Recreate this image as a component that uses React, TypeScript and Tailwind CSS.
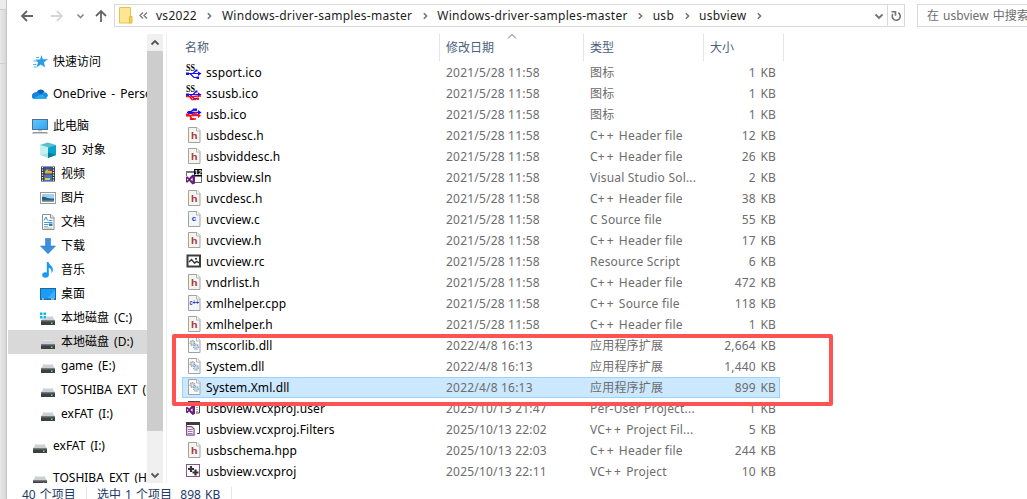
import React from 'react';
import clsx from 'clsx';

type FileKind = 'ssport' | 'ssusb' | 'usb' | 'h' | 'c' | 'cpp' | 'sln' | 'rc' | 'dll' | 'user' | 'filters' | 'vcxproj';

interface FileEntry {
  name: string;
  date: string;
  type: string;
  size: string;
  kind: FileKind;
  selected?: boolean;
}

const files: FileEntry[] = [
  { name: 'ssport.ico', date: '2021/5/28 11:58', type: '图标', size: '1 KB', kind: 'ssport' },
  { name: 'ssusb.ico', date: '2021/5/28 11:58', type: '图标', size: '1 KB', kind: 'ssusb' },
  { name: 'usb.ico', date: '2021/5/28 11:58', type: '图标', size: '1 KB', kind: 'usb' },
  { name: 'usbdesc.h', date: '2021/5/28 11:58', type: 'C++ Header file', size: '12 KB', kind: 'h' },
  { name: 'usbviddesc.h', date: '2021/5/28 11:58', type: 'C++ Header file', size: '26 KB', kind: 'h' },
  { name: 'usbview.sln', date: '2021/5/28 11:58', type: 'Visual Studio Sol...', size: '2 KB', kind: 'sln' },
  { name: 'uvcdesc.h', date: '2021/5/28 11:58', type: 'C++ Header file', size: '38 KB', kind: 'h' },
  { name: 'uvcview.c', date: '2021/5/28 11:58', type: 'C Source file', size: '55 KB', kind: 'c' },
  { name: 'uvcview.h', date: '2021/5/28 11:58', type: 'C++ Header file', size: '17 KB', kind: 'h' },
  { name: 'uvcview.rc', date: '2021/5/28 11:58', type: 'Resource Script', size: '6 KB', kind: 'rc' },
  { name: 'vndrlist.h', date: '2021/5/28 11:58', type: 'C++ Header file', size: '472 KB', kind: 'h' },
  { name: 'xmlhelper.cpp', date: '2021/5/28 11:58', type: 'C++ Source file', size: '118 KB', kind: 'cpp' },
  { name: 'xmlhelper.h', date: '2021/5/28 11:58', type: 'C++ Header file', size: '1 KB', kind: 'h' },
  { name: 'mscorlib.dll', date: '2022/4/8 16:13', type: '应用程序扩展', size: '2,664 KB', kind: 'dll' },
  { name: 'System.dll', date: '2022/4/8 16:13', type: '应用程序扩展', size: '1,440 KB', kind: 'dll' },
  { name: 'System.Xml.dll', date: '2022/4/8 16:13', type: '应用程序扩展', size: '899 KB', kind: 'dll', selected: true },
  { name: 'usbview.vcxproj.user', date: '2025/10/13 21:47', type: 'Per-User Project...', size: '1 KB', kind: 'user' },
  { name: 'usbview.vcxproj.Filters', date: '2025/10/13 22:02', type: 'VC++ Project Fil...', size: '5 KB', kind: 'filters' },
  { name: 'usbschema.hpp', date: '2025/10/13 22:03', type: 'C++ Header file', size: '244 KB', kind: 'h' },
  { name: 'usbview.vcxproj', date: '2025/10/13 22:11', type: 'VC++ Project', size: '10 KB', kind: 'vcxproj' },
];

const crumbs = ['vs2022', 'Windows-driver-samples-master', 'Windows-driver-samples-master', 'usb', 'usbview'];

const Svg: React.FC<{ children: React.ReactNode }> = ({ children }) => (
  <svg width="16" height="16" viewBox="0 0 16 16" className="shrink-0">{children}</svg>
);

const Page: React.FC<{ fill?: string; children?: React.ReactNode }> = ({ fill = '#f3f6f0', children }) => (
  <Svg>
    <path d="M2.5.5h8.500l3 3v12H2.500z" fill={fill} stroke="#a0a39e" />
    <path d="M10.500.5v3.500H14" fill="#fff" stroke="#b4b6b2" />
    {children}
  </Svg>
);

const VsMark: React.FC<{ y: number }> = ({ y }) => (
  <path
    transform={`translate(0 ${y})`}
    fill="#68217a"
    fillRule="evenodd"
    d="M6.500 0L9 1v8l-2.500 1L3.200 6.600 1.200 8.200 0 7.600V2.400l1.200-.6 2 1.600zM1.200 3.700v2.600L2.400 5zM6.500 3.200L4.600 5l1.900 1.800z"
  />
);

const UsbTrident: React.FC<{ ss?: boolean; red?: boolean }> = ({ ss, red }) => (
  <Svg>
    {ss ? (
      <>
        <path d="M1 9.500h12M4 9.500l4 4h3M7 9.500l3-3" stroke="#1010ff" strokeWidth="1.200" fill="none" />
        <path d="M12 7.500l3.500 2-3.500 2.500z" fill="#1010ff" />
        <path d="M0 8.500h3v2.500H0zM9.500 5.500h2v2h-2z" fill="#1010ff" />
        <path d="M10.500 12.500h2.500v2.500h-2.500z" fill={red ? '#ff1010' : '#1010ff'} />
        {red && <path d="M0 11.500h8l4-.5h3M4 12l2 2.500h4" stroke="#ff1010" strokeWidth="1.700" fill="none" />}
        <text x="0" y="6.800" fontSize="9.500" fontWeight="bold" fontFamily="Liberation Serif, serif" textLength="9" lengthAdjust="spacingAndGlyphs" fill="#000">SS</text>
      </>
    ) : (
      <>
        <path d="M1 6.500h12M4 6.500l3-2.500h4M5 7l3 2h4" stroke="#1010ff" strokeWidth="1.400" fill="none" />
        <path d="M12 4l3.500 2.500L12 9zM2 5h3v3H2z" fill="#1010ff" />
        <path d="M1 9.500h12M4 10l2 3h4M6 9l3-2h2" stroke="#ff1010" strokeWidth="1.500" fill="none" />
        <path d="M12 7.500l3 2-3 2.500zM0 7.500h3.500v3H0zM4 12h4v2H4z" fill="#ff1010" />
        <path d="M7 2.500h4v2H7z" fill="#1010ff" />
      </>
    )}
  </Svg>
);

const FileGlyph: React.FC<{ kind: FileKind }> = ({ kind }) => {
  switch (kind) {
    case 'ssport':
      return <UsbTrident ss />;
    case 'ssusb':
      return <UsbTrident ss red />;
    case 'usb':
      return <UsbTrident />;
    case 'h':
      return (
        <Page>
          <text x="5" y="12" fontSize="8.500" fontWeight="bold" fontFamily="Liberation Sans, sans-serif" textLength="6.500" lengthAdjust="spacingAndGlyphs" fill="#a8373c">h</text>
        </Page>
      );
    case 'c':
      return (
        <Page fill="#f1f4f8">
          <text x="5.800" y="10.300" fontSize="8" fontWeight="bold" fontFamily="Liberation Sans, sans-serif" fill="#2b35b0">c</text>
        </Page>
      );
    case 'cpp':
      return (
        <Page fill="#f1f4f8">
          <text x="3.500" y="10" fontSize="7.500" fontWeight="bold" fontFamily="Liberation Sans, sans-serif" textLength="9.500" lengthAdjust="spacingAndGlyphs" fill="#2b35b0">c++</text>
        </Page>
      );
    case 'dll':
      return (
        <Page fill="#fbfbfb">
          <circle cx="6.500" cy="6" r="2.200" fill="none" stroke="#98a1a6" strokeWidth="1.600" strokeDasharray="1.200 .6" />
          <circle cx="6.500" cy="6" r="1.300" fill="#e8ecee" stroke="#a5aeb3" strokeWidth=".6" />
          <circle cx="10" cy="9.800" r="2.300" fill="none" stroke="#86aeca" strokeWidth="1.600" strokeDasharray="1.200 .6" />
          <circle cx="10" cy="9.800" r="1.300" fill="#e4f0f8" stroke="#86aeca" strokeWidth=".6" />
        </Page>
      );
    case 'sln':
      return (
        <Svg>
          <path d="M.5 7V2.500H8M9 13.500h6.500V7" fill="none" stroke="#6a6a6a" />
          <path d="M0 2h8v2H0z" fill="#777" />
          <rect x="8" width="8" height="7.500" fill="#000" />
          <text x="8.600" y="6" fontSize="6.500" fontWeight="bold" fontFamily="Liberation Sans, sans-serif" fill="#fff">12</text>
          <VsMark y={5.500} />
        </Svg>
      );
    case 'user':
      return (
        <Svg>
          <path d="M2.500 6V1.500h11v11.500H10" fill="#fff" stroke="#444" />
          <path d="M2 1h12v3H2z" fill="#444" />
          <path d="M11 5v7" stroke="#555" strokeDasharray="1 1" />
          <VsMark y={5} />
        </Svg>
      );
    case 'filters':
      return (
        <Svg>
          <path d="M.5 5V1.500h13v11H11" fill="#fff" stroke="#3d3d3d" />
          <path d="M0 1h14v3H0z" fill="#3d3d3d" />
          <path d="M.6 5.600h5l2.500 2.500v6H.600z" fill="#f5eef7" stroke="#85548f" strokeWidth="1.200" />
          <path d="M2 8.500h4.500M2 10.500h4.500M2 12.500h4.500" stroke="#85548f" strokeWidth=".8" />
        </Svg>
      );
    case 'rc':
      return (
        <Svg>
          <rect x="1.500" y="2.500" width="12.500" height="11" fill="#fff" stroke="#3c3c3c" strokeWidth="2" />
          <path d="M3 9l2.500-2.500 3 3.500 2.500-1.500 2 1.500" fill="none" stroke="#3c3c3c" strokeWidth="1.500" />
          <circle cx="10" cy="5.800" r="1.100" fill="#3c3c3c" />
        </Svg>
      );
    case 'vcxproj':
      return (
        <Svg>
          <rect x=".5" y="1.500" width="13" height="12" fill="#fff" stroke="#85548f" />
          <path d="M5 3v6M2 6h6M9.500 6.500v6M6.500 9.500h6" stroke="#333" strokeWidth="2.200" />
        </Svg>
      );
  }
};

const Drive: React.FC<{ windows?: boolean }> = ({ windows }) => (
  <Svg>
    <path d="M3.500 6h9l2.500 5H1z" fill="#ccd0d4" />
    <path d="M3.500 6h9l.5 1H3z" fill="#e4e7e9" />
    <path d="M1 10.500h14V15H1z" fill="#3c4043" />
    <path d="M1 10.500h14v1H1z" fill="#6a6f73" />
    <path d="M11 12.500h1.500V14H11z" fill="#59f36a" />
    {windows && (
      <>
        <path d="M0 2h6.500v6.500H0z" fill="#fff" />
        <path d="M0 2.500h2.500V5H0zM3.500 2.500H6V5H3.500zM0 6h2.500v2.500H0zM3.500 6H6v2.500H3.500z" fill="#13b5ea" />
      </>
    )}
  </Svg>
);

const StarIcon = () => (
  <Svg>
    <path d="M9.500 1l1.400 4.300H16l-4 3 1 5.200-4.200-2.900-4.300 3L6 8.500 3.500 5.600h4.600z" fill="#2a9be8" />
    <path d="M4 3.500h3M1.500 7h4M1 10.500h3.500M1.500 13h3" stroke="#5bb7f0" strokeWidth="1.200" />
  </Svg>
);

const CloudIcon = () => (
  <Svg>
    <path d="M4.500 6.500a4.500 4.500 0 0 1 8-1l-3 4-6 2z" fill="#0a62b8" />
    <path d="M3.500 6.200A3.700 3.700 0 0 0 1.500 13l8-4-3-2.400a4 4 0 0 0-3-.4z" fill="#1285d8" />
    <path d="M9 8l3-1.700a3.600 3.600 0 0 1 4 3.500L13.500 13z" fill="#1592e6" />
    <path d="M1.200 12.400L8.500 8.600l6.500 3.600a2.800 2.800 0 0 1-2 .9H3.500a3.400 3.400 0 0 1-2.300-.7z" fill="#29a8ec" />
  </Svg>
);

const ComputerIcon = () => (
  <Svg>
    <defs>
      <linearGradient id="screen" x2="1" y2="1">
        <stop stopColor="#6bc6ff" />
        <stop offset="1" stopColor="#2ba4f5" />
      </linearGradient>
    </defs>
    <rect x=".5" y="1.500" width="15" height="10" fill="url(#screen)" stroke="#48748f" />
    <path d="M6 12h4v1.500H6z" fill="#c3ccd2" />
    <path d="M1 14h14l1 1.500H0z" fill="#8d9aa5" />
  </Svg>
);

const CubeIcon = () => (
  <Svg>
    <path d="M0 3l8-2.500V16l-8-3z" fill="#a8e4e6" />
    <path d="M0 3l8-2.500L16 3 9 5.500z" fill="#57bfcb" />
    <path d="M8 5.500L16 3v10l-8 3z" fill="#0aa2cf" />
    <path d="M0 3l8 2.500V11l-8 2z" fill="#c5f0ee" />
    <path d="M8 10.500l8 2.500-8 3z" fill="#087f96" />
  </Svg>
);

const VideoIcon = () => (
  <Svg>
    <path d="M1 .5h14v15H1z" fill="#333" />
    <path d="M2.500 1v15M13.500 1v15" stroke="#fff" strokeWidth="1.300" strokeDasharray="1.300 1.200" />
    <path d="M4 1h8v6.500H4z" fill="#2b55b5" />
    <path d="M4 8.500h8V15H4z" fill="#3c78d0" />
    <path d="M5 5.500l2-2.500 2 2h3v2.500H5z" fill="#d8b72c" />
    <path d="M8 3h2v2H8zM5 9.500h2v1.500H5z" fill="#d9462f" />
    <path d="M5 12h5v2H5z" fill="#e3c744" />
  </Svg>
);

const PictureIcon = () => (
  <Svg>
    <rect x=".5" y="2.500" width="15" height="11" fill="#fff" stroke="#9a9a9a" />
    <path d="M2 4h12v8H2z" fill="#9dd0f2" />
    <path d="M2 7c3-1 4 .5 6 1s4 .5 6 .5V12H2z" fill="#355f6e" />
    <path d="M2 10.500h12V12H2z" fill="#6fa5b5" />
  </Svg>
);

const DocumentIcon = () => (
  <Svg>
    <path d="M2.500.5h8.500l3 3v12H2.500z" fill="#fff" stroke="#8f8f8f" />
    <path d="M10.500.5v3.500H14" fill="#eee" stroke="#8f8f8f" />
    <path d="M4 6.500l2-3.500 1.500 3.500" stroke="#2b94dc" fill="none" />
    <path d="M8.500 6.500h4M4 8.500h8.500M4 10.500h4.500" stroke="#2b94dc" strokeWidth=".9" />
    <path d="M9 9.500h3.500V12H9z" fill="#3678a8" />
    <path d="M4 12.500h4M4 14h8.500" stroke="#999" strokeWidth=".8" />
  </Svg>
);

const DownloadIcon = () => (
  <Svg>
    <path d="M5.500.5h5V8h5L8 15.700.5 8h5z" fill="#3b8fdc" stroke="#2f7cc6" strokeWidth=".6" />
  </Svg>
);

const MusicIcon = () => (
  <Svg>
    <ellipse cx="5.500" cy="13" rx="3.300" ry="2.700" fill="#1a9af0" />
    <path d="M6.800 0h1.800c.4 3 4.600 4 4.300 8-.1 1.300-.8 2.500-1.500 3.200C12 8 10.800 6.500 8.800 5.800V13h-2z" fill="#1a9af0" />
  </Svg>
);

const DesktopIcon = () => (
  <Svg>
    <rect x=".5" y="2.500" width="15" height="11" fill="#1b9df5" stroke="#17699f" />
    <path d="M7 12.500L15 4v8.500z" fill="#3bb0fa" />
    <path d="M1 12.500h14v1H1z" fill="#1878b8" />
    <path d="M2 13h2M11 13h3" stroke="#fff" strokeWidth=".9" />
  </Svg>
);

interface NavItemProps {
  icon: React.ReactNode;
  label: string;
  nested?: boolean;
  active?: boolean;
}

const NavItem: React.FC<NavItemProps> = ({ icon, label, nested, active }) => (
  <div
    className={clsx(
      'flex h-6 shrink-0 items-center gap-[5px] whitespace-nowrap text-black',
      nested ? 'pl-8' : 'pl-6',
      active && 'bg-[#d9d9d9]',
    )}
  >
    {icon}
    <span className="[word-spacing:2px]">{label}</span>
  </div>
);

const Chevron: React.FC<{ className?: string }> = ({ className }) => (
  <svg viewBox="0 0 10 10" className={clsx('shrink-0', className)} fill="none" stroke="currentColor" strokeWidth="1.800">
    <path d="M1.500 3.500L5 7l3.500-3.500" />
  </svg>
);

const Toolbar = () => (
  <div className="flex h-[30px] shrink-0 items-start pt-1">
    <svg width="107" height="23" viewBox="0 0 107 23" className="shrink-0" fill="none" stroke="#666" strokeWidth="1.800">
      <path d="M26 12H15M20 7l-5 5 5 5" />
      <path d="M44 12h11M50 7l5 5-5 5" stroke="#d6d6d6" />
      <path d="M70.500 10.500l3 3 3-3" stroke="#888" strokeWidth="1.600" />
      <path d="M94 18V7M89 12l5-5 5 5" />
    </svg>
    <div className="flex h-[23px] w-[791px] shrink-0 items-center border border-[#d9d9d9] text-[#1c1c1c]">
      <svg width="14" height="17" viewBox="0 0 14 17" className="ml-1 shrink-0">
        <path d="M.5.5h11v15.500H.5z" fill="#ffe694" stroke="#e9c34e" />
        <path d="M10.500 9.500H13V16h-2.500z" fill="#fbd45e" stroke="#e2b63d" />
      </svg>
      <svg width="10" height="9" viewBox="0 0 10 9" className="mr-[7px] ml-[6px] shrink-0" fill="none" stroke="#777" strokeWidth="1.300">
        <path d="M4 1.500l-3 3 3 3M8 1.500l-3 3 3 3" />
      </svg>
      {crumbs.map((crumb, i) => (
        <React.Fragment key={i}>
          <span className="tracking-[0.270px]">{crumb}</span>
          <span className="flex w-[25px] justify-center">
            <Chevron className="size-2 -rotate-90 text-[#6d6d6d]" />
          </span>
        </React.Fragment>
      ))}
      <Chevron className="mr-[3px] ml-auto size-[10px] text-[#737373]" />
      <span className="flex h-full w-[17px] items-center justify-center border-l border-[#d9d9d9]">
        <svg width="12" height="12" viewBox="0 0 12 12" fill="none" stroke="#737373" strokeWidth="1.600">
          <path d="M8.300 2.800A4 4 0 1 1 2.900 4" />
          <path d="M1.500 1.800h4v4" />
        </svg>
      </span>
    </div>
    <div className="ml-3 flex h-[23px] flex-1 items-center overflow-hidden border border-r-0 border-[#d9d9d9] pl-[9px] whitespace-nowrap text-[#6d6d6d] [word-spacing:1px]">
      在 usbview 中搜索
    </div>
  </div>
);

const Sidebar = () => (
  <div className="flex w-[157px] shrink-0">
    <div className="flex w-[140px] flex-col overflow-hidden pt-5 pl-px">
      <NavItem icon={<StarIcon />} label="快速访问" />
      <div className="h-2 shrink-0" />
      <NavItem icon={<CloudIcon />} label="OneDrive - Personal" />
      <div className="h-2 shrink-0" />
      <NavItem icon={<ComputerIcon />} label="此电脑" />
      <NavItem nested icon={<CubeIcon />} label="3D 对象" />
      <NavItem nested icon={<VideoIcon />} label="视频" />
      <NavItem nested icon={<PictureIcon />} label="图片" />
      <NavItem nested icon={<DocumentIcon />} label="文档" />
      <NavItem nested icon={<DownloadIcon />} label="下载" />
      <NavItem nested icon={<MusicIcon />} label="音乐" />
      <NavItem nested icon={<DesktopIcon />} label="桌面" />
      <NavItem nested icon={<Drive windows />} label="本地磁盘 (C:)" />
      <NavItem nested active icon={<Drive />} label="本地磁盘 (D:)" />
      <NavItem nested icon={<Drive />} label="game (E:)" />
      <NavItem nested icon={<Drive />} label="TOSHIBA EXT (H:)" />
      <NavItem nested icon={<Drive />} label="exFAT (I:)" />
      <div className="h-2 shrink-0" />
      <NavItem icon={<Drive />} label="exFAT (I:)" />
      <div className="h-2 shrink-0" />
      <NavItem icon={<Drive />} label="TOSHIBA EXT (H:)" />
    </div>
    <div className="mt-1 flex w-4 flex-col items-center bg-[#f0f0f0] text-[#555]">
      <div className="flex h-[17px] items-center">
        <Chevron className="size-[10px] rotate-180" />
      </div>
      <div className="h-[380px] w-full bg-[#cdcdcd]" />
      <Chevron className="mt-auto mb-[3px] size-[10px]" />
    </div>
  </div>
);

// Plus signs are set a little wider than the letters around them
const TypeLabel: React.FC<{ text: string }> = ({ text }) => {
  const [before, after] = text.split('++');
  return (
    <>
      {before}
      {after !== undefined && <span className="tracking-[2px]">++</span>}
      {after}
    </>
  );
};

const FileRow: React.FC<{ file: FileEntry }> = ({ file }) => (
  <div
    className={clsx(
      'flex h-[21px] w-[598px] shrink-0 items-center pl-1 text-[#6d6d6d]',
      file.selected && 'bg-[#cce8ff] outline outline-1 -outline-offset-1 outline-[#99d1ff]',
    )}
  >
    <span className="mb-px">
      <FileGlyph kind={file.kind} />
    </span>
    <span className="ml-1 w-[240px] tracking-[0.1px] text-black">{file.name}</span>
    <span className="w-36 tracking-[0.2px]">{file.date}</span>
    <span className="w-[120px] tracking-[0.2px] whitespace-nowrap">
      <TypeLabel text={file.type} />
    </span>
    <span className="ml-auto pr-1 tracking-[0.15px] [word-spacing:1.5px]">{file.size}</span>
  </div>
);

const HeaderCell: React.FC<{ label: string; className?: string; sorted?: boolean }> = ({ label, className, sorted }) => (
  <div className={clsx('relative flex items-center border-r border-[#e5e5e5]', className)}>
    {label}
    {sorted && (
      <svg width="9" height="5" viewBox="0 0 9 5" className="absolute top-0 left-1/2 -translate-x-1/2" fill="none" stroke="#6a6a6a">
        <path d="M.5 4.500l4-4 4 4" />
      </svg>
    )}
  </div>
);

const FileList = () => (
  <div className="relative mt-1 ml-[2px] flex flex-1 flex-col border-l border-[#f0f0f0] pl-[15px]">
    <div className="flex h-[27px] shrink-0 text-[#4c607a]">
      <HeaderCell label="名称" className="w-[258px] pl-[3px]" />
      <HeaderCell label="修改日期" className="w-36 pl-[6px]" sorted />
      <HeaderCell label="类型" className="w-[120px] pl-[6px]" />
      <HeaderCell label="大小" className="w-20 pl-[6px]" />
    </div>
    <div className="mt-px flex flex-col">
      {files.map((file) => (
        <FileRow key={file.name} file={file} />
      ))}
    </div>
    {/* Highlight around the copied assemblies */}
    <div className="absolute top-[300px] left-[5px] h-[72px] w-[661px] rounded-[2px] border-4 border-[#ff5252]" />
  </div>
);

const App: React.FC = () => (
  <div className="flex h-[499px] w-[1027px] overflow-hidden bg-white font-['Noto_Sans','Noto_Sans_CJK_SC',sans-serif] text-[12px] leading-4">
    <div className="flex w-[7px] shrink-0 flex-col border-r border-[#c4c4c4] bg-linear-to-r from-[#e8e8e8] to-[#d8d8d8]">
      <div className="h-[10px] border-b border-[#cfcfcf] bg-[#ececec]" />
      <div className="h-[54px] border-b border-[#cfcfcf]" />
    </div>
    <div className="flex min-w-0 flex-1 flex-col">
      <Toolbar />
      <div className="flex h-[453px] shrink-0">
        <Sidebar />
        <FileList />
      </div>
      <div className="flex h-6 shrink-0 items-center whitespace-nowrap text-[#1e3a66] [word-spacing:1px]">
        <span className="w-[80px] border-r border-[#e5e5e5] pl-[15px]">40 个项目</span>
        <span className="w-[145px] border-r border-[#e5e5e5] pl-[10px]">选中 1 个项目&nbsp; 898 KB</span>
      </div>
    </div>
  </div>
);

export default App;
